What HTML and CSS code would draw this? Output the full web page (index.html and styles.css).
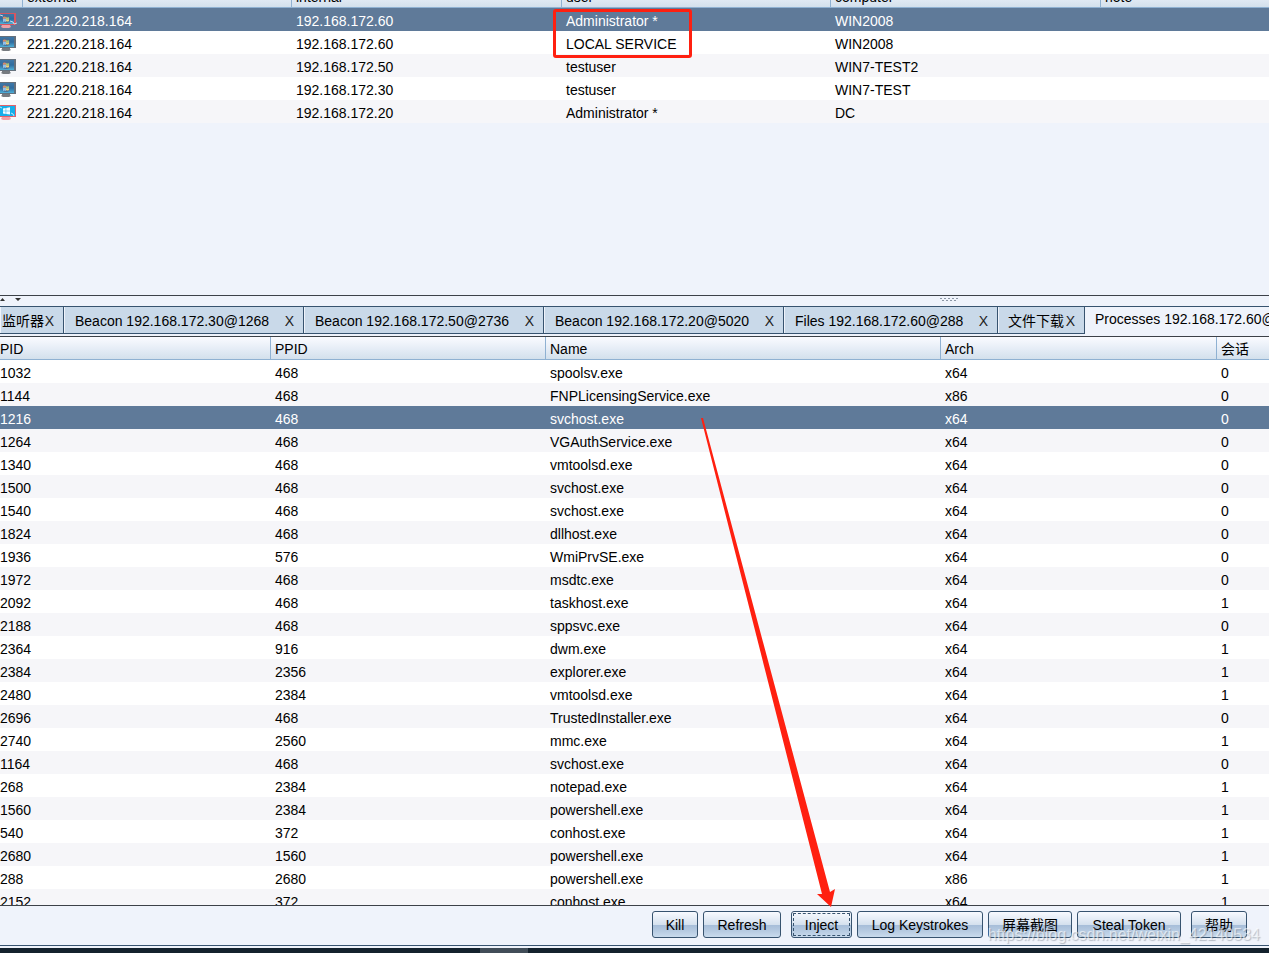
FILE: index.html
```html
<!DOCTYPE html>
<html lang="zh-CN">
<head>
<meta charset="utf-8">
<title>Beacon console</title>
<link rel="stylesheet" href="styles.css">
</head>
<body>
<svg class="defs" aria-hidden="true">
  <defs>
    <linearGradient id="screen" x1="0" y1="0" x2="0" y2="1">
      <stop offset="0" stop-color="#3f78a8"/><stop offset="0.5" stop-color="#2f6c9f"/><stop offset="1" stop-color="#4fb0d8"/>
    </linearGradient>
    <symbol id="win7" viewBox="0 0 17 16">
      <path d="M2 12h8v1l1 1-2 1H3l-2-1 1-1z" fill="#777b80"/>
      <rect x="0" y="0" width="16" height="12" fill="#65717d"/>
      <rect x="0" y="1" width="14" height="10" fill="url(#screen)"/>
      <circle cx="6" cy="6" r="4" fill="#4a6f96"/>
      <path d="M3 4q1.500-1 3 0v2q-1.500-1-3 0z" fill="#d98a68"/><path d="M6 4q1.500 1 3 0v2q-1.500 1-3 0z" fill="#a5c87c"/>
      <path d="M3 6q1.500-1 3 0v3q-1.500-1-3 0z" fill="#8fc0ea"/><path d="M6 6q1.500 1 3 0v2q-1.500 1-3 0z" fill="#f0d27a"/>
    </symbol>
    <symbol id="win7hot" viewBox="0 0 17 16">
      <path d="M2 12h8l1 2-2 1H3l-2-1z" fill="#f0a0a6"/>
      <rect x="0" y="0" width="16" height="12" fill="#d65661"/>
      <rect x="0" y="1" width="14" height="10" fill="url(#screen)"/>
      <circle cx="6" cy="6" r="4" fill="#4a6f96"/>
      <path d="M3 4q1.500-1 3 0v2q-1.500-1-3 0z" fill="#d98a68"/><path d="M6 4q1.500 1 3 0v2q-1.500 1-3 0z" fill="#a5c87c"/>
      <path d="M3 6q1.500-1 3 0v3q-1.500-1-3 0z" fill="#8fc0ea"/><path d="M6 6q1.500 1 3 0v2q-1.500 1-3 0z" fill="#f0d27a"/>
      <path d="M0 2l3 1M10 8l3 1 1 2 3-1" fill="none" stroke="#c9d8e8"/>
    </symbol>
    <symbol id="win8hot" viewBox="0 0 17 16">
      <path d="M2 12h8l1 2-2 1H3l-2-1z" fill="#f0a0a6"/>
      <rect x="0" y="0" width="16" height="12" fill="#e0606b"/>
      <rect x="0" y="1" width="15" height="10" fill="#14aeea"/>
      <path d="M3 3.500l2.700-.5v2.700H3zM6.200 3L10 2.300v3.400H6.200zM3 6.200h2.700v2.700L3 8.400zM6.200 6.200H10v3.400L6.200 9z" fill="#f3fbff"/>
      <path d="M0 2l2 1M11 8l2 1 1 2" fill="none" stroke="#c3e6f7"/>
    </symbol>
  </defs>
</svg>
<main class="app">
  <section class="sessions">
    <table class="grid grid-sessions">
      <colgroup><col class="c-icon"><col class="c-session"><col class="c-user"><col class="c-session"><col class="c-user"><col></colgroup>
      <thead><tr><th></th><th>external</th><th>internal</th><th>user</th><th>computer</th><th>note</th></tr></thead>
      <tbody>
        <tr class="selected"><td><svg class="host"><use href="#win7hot"/></svg></td><td>221.220.218.164</td><td>192.168.172.60</td><td>Administrator *</td><td>WIN2008</td><td></td></tr>
        <tr><td><svg class="host"><use href="#win7"/></svg></td><td>221.220.218.164</td><td>192.168.172.60</td><td>LOCAL SERVICE</td><td>WIN2008</td><td></td></tr>
        <tr><td><svg class="host"><use href="#win7"/></svg></td><td>221.220.218.164</td><td>192.168.172.50</td><td>testuser</td><td>WIN7-TEST2</td><td></td></tr>
        <tr><td><svg class="host"><use href="#win7"/></svg></td><td>221.220.218.164</td><td>192.168.172.30</td><td>testuser</td><td>WIN7-TEST</td><td></td></tr>
        <tr><td><svg class="host"><use href="#win8hot"/></svg></td><td>221.220.218.164</td><td>192.168.172.20</td><td>Administrator *</td><td>DC</td><td></td></tr>
      </tbody>
    </table>
  </section>
  <div class="divider">
    <svg class="arrows" viewBox="0 0 24 4"><path d="M0 4l2.500-3L5 4zM15 1h6l-3 3z" fill="#333"/></svg>
    <svg class="grip" viewBox="0 0 20 4"><path d="M1 1.500h18" stroke="#8b96a5" stroke-dasharray="2 2"/><path d="M3 3.500h14" stroke="#8b96a5" stroke-dasharray="2 2"/></svg>
  </div>
  <nav class="tabs">
    <div class="tab tab-first"><span>监听器</span><button class="close">X</button></div>
    <div class="tab tab-beacon"><span>Beacon 192.168.172.30@1268</span><button class="close">X</button></div>
    <div class="tab tab-beacon"><span>Beacon 192.168.172.50@2736</span><button class="close">X</button></div>
    <div class="tab tab-beacon"><span>Beacon 192.168.172.20@5020</span><button class="close">X</button></div>
    <div class="tab tab-files"><span>Files 192.168.172.60@288</span><button class="close">X</button></div>
    <div class="tab tab-down"><span>文件下载</span><button class="close">X</button></div>
    <div class="tab active"><span>Processes 192.168.172.60@288</span></div>
  </nav>
  <section class="processes">
    <table class="grid">
      <colgroup><col class="c-pid"><col class="c-ppid"><col><col class="c-arch"><col class="c-sid"></colgroup>
      <thead><tr><th>PID</th><th>PPID</th><th>Name</th><th>Arch</th><th>会话</th></tr></thead>
      <tbody>
        <tr><td>1032</td><td>468</td><td>spoolsv.exe</td><td>x64</td><td>0</td></tr>
        <tr><td>1144</td><td>468</td><td>FNPLicensingService.exe</td><td>x86</td><td>0</td></tr>
        <tr class="selected"><td>1216</td><td>468</td><td>svchost.exe</td><td>x64</td><td>0</td></tr>
        <tr><td>1264</td><td>468</td><td>VGAuthService.exe</td><td>x64</td><td>0</td></tr>
        <tr><td>1340</td><td>468</td><td>vmtoolsd.exe</td><td>x64</td><td>0</td></tr>
        <tr><td>1500</td><td>468</td><td>svchost.exe</td><td>x64</td><td>0</td></tr>
        <tr><td>1540</td><td>468</td><td>svchost.exe</td><td>x64</td><td>0</td></tr>
        <tr><td>1824</td><td>468</td><td>dllhost.exe</td><td>x64</td><td>0</td></tr>
        <tr><td>1936</td><td>576</td><td>WmiPrvSE.exe</td><td>x64</td><td>0</td></tr>
        <tr><td>1972</td><td>468</td><td>msdtc.exe</td><td>x64</td><td>0</td></tr>
        <tr><td>2092</td><td>468</td><td>taskhost.exe</td><td>x64</td><td>1</td></tr>
        <tr><td>2188</td><td>468</td><td>sppsvc.exe</td><td>x64</td><td>0</td></tr>
        <tr><td>2364</td><td>916</td><td>dwm.exe</td><td>x64</td><td>1</td></tr>
        <tr><td>2384</td><td>2356</td><td>explorer.exe</td><td>x64</td><td>1</td></tr>
        <tr><td>2480</td><td>2384</td><td>vmtoolsd.exe</td><td>x64</td><td>1</td></tr>
        <tr><td>2696</td><td>468</td><td>TrustedInstaller.exe</td><td>x64</td><td>0</td></tr>
        <tr><td>2740</td><td>2560</td><td>mmc.exe</td><td>x64</td><td>1</td></tr>
        <tr><td>1164</td><td>468</td><td>svchost.exe</td><td>x64</td><td>0</td></tr>
        <tr><td>268</td><td>2384</td><td>notepad.exe</td><td>x64</td><td>1</td></tr>
        <tr><td>1560</td><td>2384</td><td>powershell.exe</td><td>x64</td><td>1</td></tr>
        <tr><td>540</td><td>372</td><td>conhost.exe</td><td>x64</td><td>1</td></tr>
        <tr><td>2680</td><td>1560</td><td>powershell.exe</td><td>x64</td><td>1</td></tr>
        <tr><td>288</td><td>2680</td><td>powershell.exe</td><td>x86</td><td>1</td></tr>
        <tr><td>2152</td><td>372</td><td>conhost.exe</td><td>x64</td><td>1</td></tr>
      </tbody>
    </table>
  </section>
  <footer class="actions">
    <button class="btn b-kill">Kill</button>
    <button class="btn b-refresh">Refresh</button>
    <button class="btn b-inject focused">Inject</button>
    <button class="btn b-log">Log Keystrokes</button>
    <button class="btn b-shot">屏幕截图</button>
    <button class="btn b-steal">Steal Token</button>
    <button class="btn b-help">帮助</button>
  </footer>
  <div class="taskbar"><div class="task"></div></div>
  <div class="mark-box"></div>
  <svg class="mark-arrow" viewBox="0 0 136 492"><path d="M1 1L3 1L130 475L135 472L131 490L117 477L122 477Z" fill="#ff2010"/></svg>
  <div class="watermark">https://blog.csdn.net/weixin_42140534</div>
</main>
</body>
</html>
```
FILE: styles.css
```css
* { box-sizing: border-box; }
body {
  margin: 0;
  background: #eff3fb;
  color: #000;
  font: 14px/23px "Liberation Sans", "Noto Sans CJK SC", sans-serif;
  overflow: hidden;
}
.defs { position: absolute; width: 0; height: 0; }
.app { position: relative; display: flex; flex-direction: column; height: 100vh; overflow: hidden; }

.grid { width: 100%; table-layout: fixed; border-collapse: separate; border-spacing: 0; }
.grid th, .grid td { height: 23px; padding: 3px 0 0 4px; line-height: 20px; text-align: left; font-weight: normal; white-space: nowrap; overflow: hidden; }
.grid th {
  padding-top: 2px;
  border-right: 1px solid #8fb1d2;
  border-bottom: 1px solid #8fb1d2;
  background: linear-gradient(#fafbff, #e3ebf5 60%, #d3e0ec);
}
.grid th:last-child { border-right: 0; }
.grid th:first-child, .grid td:first-child { padding-left: 0; }
.grid tbody tr { background: #fff; }
.grid tbody tr:nth-child(even) { background: #f6f6f9; }
.grid-sessions tbody tr:nth-child(odd) { background: #f6f6f9; }
.grid-sessions tbody tr:nth-child(even) { background: #fff; }
.grid tbody tr.selected:nth-child(n) { background: #5f7a99; color: #fff; }
.c-icon { width: 23px; }
.c-session { width: 269px; }
.c-user { width: 270px; }
.c-pid { width: 271px; }
.c-ppid { width: 275px; }
.c-arch { width: 276px; }
.c-sid { width: 52px; }
.host { display: block; width: 17px; height: 16px; }

.sessions { flex: 0 0 296px; overflow: hidden; border-bottom: 1px solid #3c4148; }
.grid-sessions { margin-top: -15px; }
.divider { flex: 0 0 10px; display: flex; justify-content: space-between; align-items: flex-start; padding: 1px 310px 0 0; }
.arrows { width: 24px; height: 4px; }
.grip { width: 20px; height: 4px; }

.tabs { flex: 0 0 30px; display: flex; align-items: flex-start; overflow: hidden; }
.tab {
  flex: none;
  display: flex;
  justify-content: space-between;
  height: 28px;
  padding: 3px 9px 0 10px;
  background: #c9d9e9;
  border: solid #37536f;
  border-width: 1px 1px 1px 0;
  box-shadow: inset 1px 0 #eff3fb;
  white-space: nowrap;
}
.tab-first { width: 64px; padding-left: 2px; }
.tab-beacon { width: 240px; padding-left: 11px; }
.tab-files { width: 214px; padding-left: 11px; }
.tab-down { width: 87px; }
.tab.active { height: 30px; padding-top: 1px; background: #eff3fb; border-width: 1px 0 0; }
.close { padding: 0; border: 0; background: none; color: #222; font: inherit; }

.processes { flex: 1 1 0; min-height: 0; overflow: hidden; border: solid #3c4148; border-width: 1px 0; }
.actions {
  flex: 0 0 40px;
  display: flex;
  justify-content: flex-end;
  gap: 5px;
  padding: 5px 22px 0 0;
  border-bottom: 1px solid #37536f;
}
.btn {
  height: 27px;
  padding: 2px 0 0;
  border: 1px solid #37536f;
  border-radius: 3px;
  background: linear-gradient(#f8faff, #d5e1ee 50%, #a6bdd8 52%, #b9cde3 80%, #c9dbed);
  color: #000;
  font: inherit;
  white-space: nowrap;
}
.focused { outline: 1px dashed #37536f; outline-offset: -3px; }
.b-kill { width: 46px; }
.b-refresh { width: 78px; }
.b-inject { width: 61px; margin-left: 5px; }
.b-log { width: 126px; }
.b-shot { width: 84px; }
.b-steal { width: 104px; }
.b-help { width: 56px; margin-left: 5px; }
.taskbar { flex: 0 0 7px; display: flex; padding: 2px 0 0 480px; }
.taskbar { background: linear-gradient(#eff3fb 2px, #14222d 2px); }
.task { width: 48px; background: #414d58; }

.mark-box { position: absolute; left: 553px; top: 9px; width: 139px; height: 49px; border: 3px solid #ff2010; border-radius: 3px; }
.mark-arrow { position: absolute; left: 700px; top: 417px; width: 136px; height: 492px; }
.watermark { position: absolute; right: 9px; bottom: 7px; color: rgba(255, 255, 255, 0.6); font-size: 16px; text-shadow: 1px 1px 1px rgba(90, 100, 115, 0.4); }
```
